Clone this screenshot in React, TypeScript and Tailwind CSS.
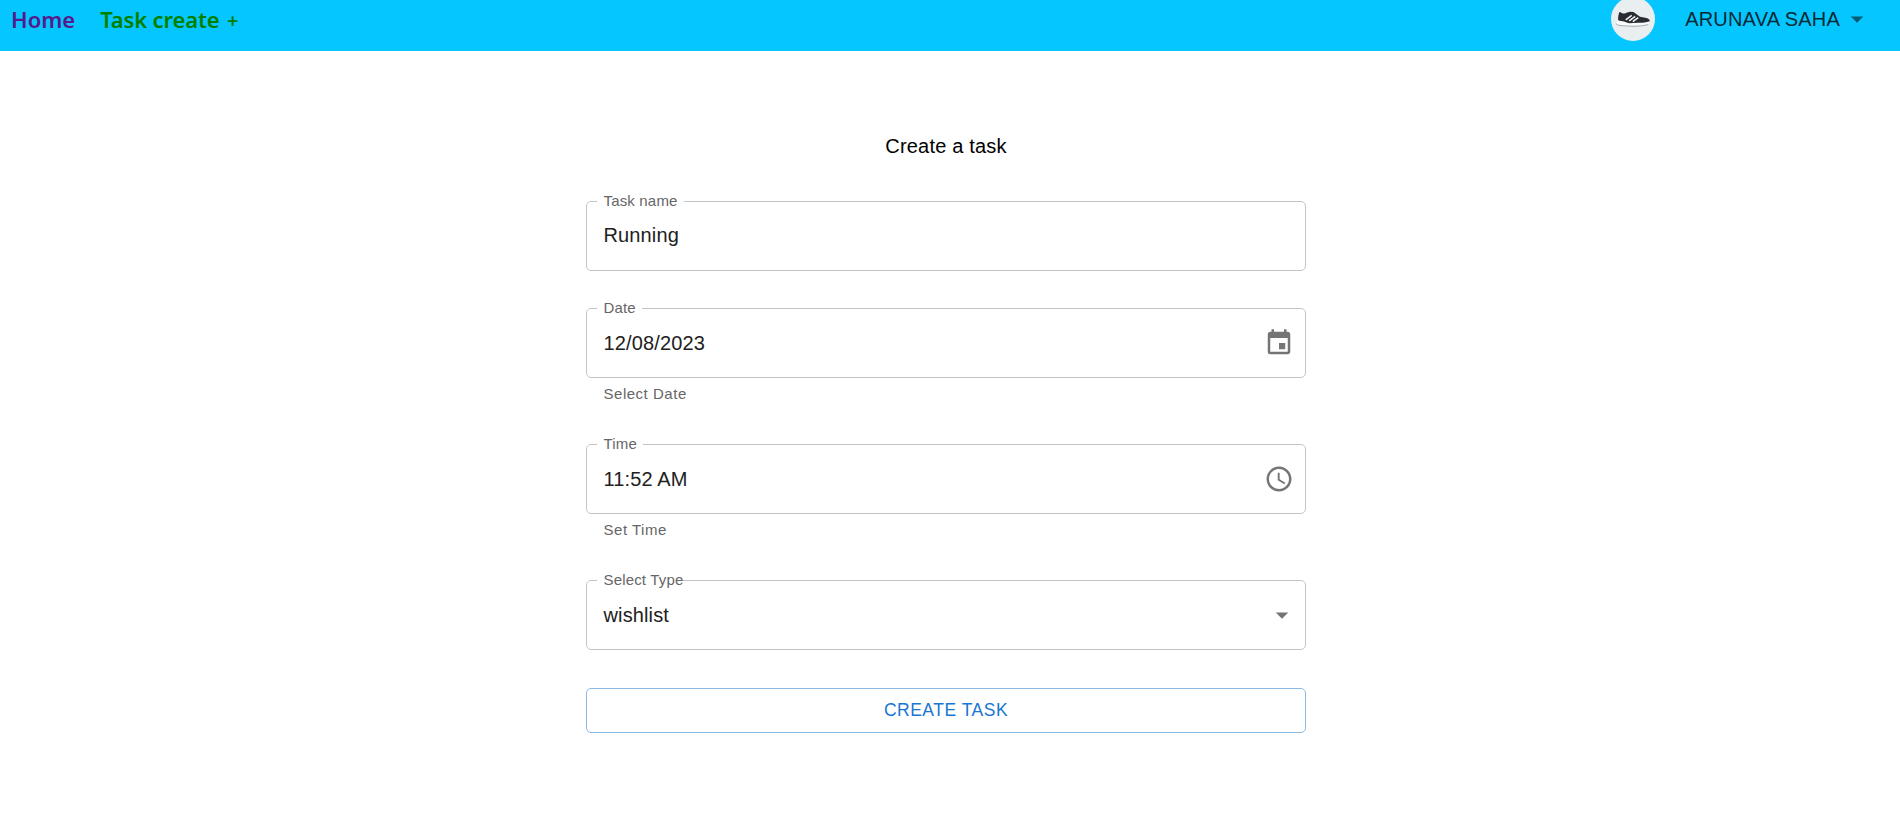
import type { ReactNode } from "react";
import { MdAccessTime, MdArrowDropDown, MdEvent } from "react-icons/md";

function Shoe() {
  return (
    <svg viewBox="0 0 44 44" className="h-11 w-11" aria-hidden="true">
      <circle cx="22" cy="22" r="22" fill="#e9eef0" />
      <path d="M4.700 25.500 8 22.500 17 25.500 38.500 24.500c.2 1.600-.6 3-2.500 3.700l-12 1.100-12-.4c-4-.3-7-1-7.300-3.400z" fill="#fafbfc" />
      <path d="M4.800 26.500c1.500 2.200 6.500 2.200 10 2.400 7 .6 15 .6 22.500-1.300" fill="none" stroke="#9ba0a8" strokeWidth="0.900" />
      <path d="M7.200 23.300c-.3-2.300.2-5.600 1.200-8.200 1.500.2 2.200 1.500 3.800 1.500 2.500 0 4-1.500 6.800-1.900l3.500.3 6.500 4.700 6.500 1.400c2 .5 3.200 1.500 3.300 3.100-4.500 1.500-8.500 1.800-12.300 1.600L18 26.200c-2-.1-3-1.200-5-1.600-2-.5-4-.3-5.800-1.300z" fill="#2a2c34" />
      <path d="m14.700 22.800 6-4.400M18.200 23.800l6-4.400M21.800 24.600l5.400-4" stroke="#f1f3f5" strokeWidth="1.500" />
    </svg>
  );
}

type FieldProps = {
  label: string;
  value: string;
  helper?: string;
  icon?: ReactNode;
  tightNotch?: boolean;
};

function Field({ label, value, helper, icon, tightNotch }: FieldProps) {
  return (
    <div>
      <fieldset className="h-[70px] rounded-[5px] border border-[#c4c4c4] pr-[11px] pl-[10px]">
        <legend
          className={`flex h-px items-center pl-[6.5px] text-[15px] tracking-[0.17px] text-[#666666] ${tightNotch ? "pr-0" : "pr-[6.5px]"}`}
        >
          <span className="-mt-[2px] leading-none">{label}</span>
        </legend>
        <div className={`flex items-center justify-between pl-[6.5px] ${icon ? "h-[68px]" : "h-[66px]"}`}>
          <span className="text-[20px] leading-[29px] tracking-[0.13px] text-[#212121]">{value}</span>
          {icon}
        </div>
      </fieldset>
      {helper && (
        <p className="mt-[3px] pb-px pl-[17.5px] text-[15px] leading-[25px] tracking-[0.52px] text-[#666666]">{helper}</p>
      )}
    </div>
  );
}

export default function App() {
  return (
    <div className="h-[821px] overflow-hidden bg-white font-['Liberation_Sans',Arial,sans-serif]">
      <header className="flex h-[51px] items-start justify-between bg-[#05c6ff] pr-[28px] pl-[11px]">
        <nav className="flex gap-[25px] pt-[4px] font-['Noto_Sans',sans-serif] text-[22px] leading-[30px] font-semibold">
          <a className="text-[#551a8b]">Home</a>
          <a className="tracking-[-0.15px] text-[#008000]">
            Task create <span className="ml-[2px] text-[20px]">+</span>
          </a>
        </nav>
        <div className="flex items-start">
          <div className="-mt-[3px]">
            <Shoe />
          </div>
          <div className="ml-[30px] flex items-center pt-[4px] text-[20px] leading-[30px] text-[#052a35]">
            <span className="tracking-[0.18px]">ARUNAVA SAHA</span>
            <MdArrowDropDown className="ml-[2px] h-[30px] w-[30px] text-[#025b75]" />
          </div>
        </div>
      </header>
      <main className="flex justify-center pt-[80px] pr-2">
        <form className="flex w-[720px] flex-col">
          <h1 className="text-center text-[20px] leading-[30px] tracking-[0.19px] text-black">Create a task</h1>
          <div className="mt-[40px] flex flex-col gap-[37px]">
            <Field label="Task name" value="Running" />
            <Field
              label="Date"
              value="12/08/2023"
              helper="Select Date"
              icon={<MdEvent className="h-[30px] w-[30px] text-[#757575]" />}
            />
            <Field
              label="Time"
              value="11:52 AM"
              helper="Set Time"
              icon={<MdAccessTime className="h-[30px] w-[30px] text-[#757575]" />}
            />
            <Field
              label="Select Type"
              value="wishlist"
              tightNotch
              icon={<MdArrowDropDown className="-mr-[3px] h-[30px] w-[30px] text-[#757575]" />}
            />
          </div>
          <button
            type="button"
            className="mt-[38px] h-[45px] rounded-[5px] border border-[#8cbae8] text-[17.5px] tracking-[0.5px] text-[#1976d2]"
          >
            CREATE TASK
          </button>
        </form>
      </main>
    </div>
  );
}
